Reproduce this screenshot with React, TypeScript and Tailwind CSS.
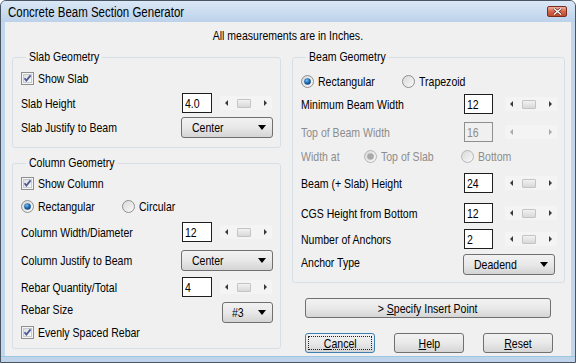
import type { ReactNode } from 'react';

const font = "font-['Liberation_Sans_Narrow','Liberation_Sans',sans-serif]";

// the dialog face is a tall, narrow sans; squeeze Liberation Sans to its width
function N({ children, c = false }: { children: ReactNode; c?: boolean }) {
  return (
    <span
      className={
        c
          ? 'inline-block origin-center scale-x-[0.81] whitespace-nowrap'
          : 'inline-block origin-left scale-x-[0.81] whitespace-nowrap'
      }
    >
      {children}
    </span>
  );
}

function Arrow({ dir, color }: { dir: 'l' | 'r'; color: string }) {
  return (
    <svg width="3" height="6" viewBox="0 0 3 6">
      <path d={dir === 'l' ? 'M3 0V6L0 3Z' : 'M0 0V6L3 3Z'} fill={color} />
    </svg>
  );
}

function Scroll({ disabled = false }: { disabled?: boolean }) {
  const c = disabled ? '#a8a8a8' : '#3a3a3a';
  return (
    <div className="flex h-[14px] w-[52px] items-center bg-[#f4f4f4]">
      <div className="flex w-[13px] justify-center">
        <Arrow dir="l" color={c} />
      </div>
      {disabled ? (
        <div className="flex-1" />
      ) : (
        <>
          <div className="ml-[4px] h-[9px] w-[14px] rounded-[1px] border border-[#c4c4c4] bg-gradient-to-b from-[#f2f2f2] to-[#d8d8d8]" />
          <div className="flex-1" />
        </>
      )}
      <div className="flex w-[13px] justify-center">
        <Arrow dir="r" color={c} />
      </div>
    </div>
  );
}

function NumBox({ value, w = 30, disabled = false }: { value: string; w?: number; disabled?: boolean }) {
  return (
    <div
      className={`flex h-[20px] items-center border pl-[2px] ${
        disabled ? 'border-[#8f8f8f] bg-[#f0f0f0] text-[#8d8d8d]' : 'border-[#1f1f1f] bg-white text-black'
      } ${w === 30 ? 'w-[30px]' : 'w-[29px]'}`}
    >
      <N>{value}</N>
    </div>
  );
}

function Check({ label }: { label: string }) {
  return (
    <div className="flex items-center">
      <svg width="13" height="13" viewBox="0 0 13 13">
        <defs>
          <linearGradient id="cb" x1="0" y1="0" x2="1" y2="1">
            <stop offset="0" stopColor="#dcdcdc" />
            <stop offset="1" stopColor="#fbfbfb" />
          </linearGradient>
        </defs>
        <rect x="0.5" y="0.5" width="12" height="12" fill="#f4f4f4" stroke="#8e8f8f" />
        <rect x="2.5" y="2.5" width="8" height="8" fill="url(#cb)" stroke="#c6cbd2" />
        <path d="M3.5 6.2L5.4 8.6L9.6 3.4" fill="none" stroke="#4a5b98" strokeWidth="1.8" />
      </svg>
      <span className="ml-[4px]">
        <N>{label}</N>
      </span>
    </div>
  );
}

function Radio({ label, checked = false, disabled = false }: { label: string; checked?: boolean; disabled?: boolean }) {
  return (
    <div className={`flex items-center ${disabled ? 'text-[#8d8d8d]' : ''}`}>
      <svg width="13" height="13" viewBox="0 0 13 13">
        <defs>
          <radialGradient id="rd" cx="0.4" cy="0.35" r="0.7">
            <stop offset="0" stopColor="#7fc3f2" />
            <stop offset="0.5" stopColor="#1f6fb8" />
            <stop offset="1" stopColor="#0c3c70" />
          </radialGradient>
          <linearGradient id="rb" x1="0" y1="0" x2="1" y2="1">
            <stop offset="0" stopColor="#d8d8d8" />
            <stop offset="1" stopColor="#fafafa" />
          </linearGradient>
        </defs>
        <circle cx="6.5" cy="6.5" r="6" fill="url(#rb)" stroke={disabled ? '#b5b5b5' : '#8e8f8f'} />
        {checked && <circle cx="6.5" cy="6.5" r="3.3" fill={disabled ? '#a9a9a9' : 'url(#rd)'} />}
      </svg>
      <span className="ml-[4px]">
        <N>{label}</N>
      </span>
    </div>
  );
}

function Combo({ value, wide = true }: { value: string; wide?: boolean }) {
  return (
    <div
      className={`flex h-[21px] items-center justify-between rounded-[3px] border border-[#707070] bg-gradient-to-b from-[#f2f2f2] via-[#e8e8e8] to-[#d4d4d4] pr-[6px] ${
        wide ? 'w-[92px] pl-[10px]' : 'w-[51px] pl-[9px]'
      }`}
    >
      <N>{value}</N>
      <svg width="8" height="5" viewBox="0 0 8 5">
        <path d="M0 0H8L4 5Z" fill="#000" />
      </svg>
    </div>
  );
}

function Btn({ children, w, focus = false }: { children: ReactNode; w: string; focus?: boolean }) {
  return (
    <div
      className={`flex h-[20px] items-center justify-center rounded-[3px] border bg-gradient-to-b from-[#f2f2f2] via-[#e9e9e9] to-[#d5d5d5] ${w} ${
        focus ? 'border-[#3c7fb1] outline outline-1 -outline-offset-4 outline-dotted outline-[#222]' : 'border-[#707070]'
      }`}
    >
      <N c>{children}</N>
    </div>
  );
}

function Group({ title, tw, children, className }: { title: string; tw: string; children: ReactNode; className: string }) {
  return (
    <fieldset className={`rounded-[3px] border border-[#d5dfe5] ${className}`}>
      <legend className="ml-[5px] px-[3px] leading-[14px]">
        <span className={`block ${tw}`}>
          <N>{title}</N>
        </span>
      </legend>
      {children}
    </fieldset>
  );
}

function Row({ label, children, cls, lw, dim = false }: { label: string; children: ReactNode; cls: string; lw: string; dim?: boolean }) {
  return (
    <div className={`flex items-center ${cls}`}>
      <div className={`${lw} ${dim ? 'text-[#8d8d8d]' : ''}`}>
        <N>{label}</N>
      </div>
      {children}
    </div>
  );
}

function Stepper({ value, gap, w, disabled = false }: { value: string; gap: string; w?: number; disabled?: boolean }) {
  return (
    <>
      <NumBox value={value} w={w} disabled={disabled} />
      <div className={gap}>
        <Scroll disabled={disabled} />
      </div>
    </>
  );
}

export default function App() {
  return (
    <div
      className={`flex h-[363px] w-[576px] flex-col overflow-hidden rounded-t-[6px] border border-[#4a5563] bg-[#c2d6ec] text-[13px] leading-none text-black ${font}`}
    >
      <div className="flex h-[21px] shrink-0 items-center justify-between bg-gradient-to-b from-[#dae8f6] to-[#bcd2ea] pl-[7px] pr-[8px]">
        <span className="inline-block origin-left scale-x-[0.82] whitespace-nowrap text-[14px]">
          Concrete Beam Section Generator
        </span>
        <div className="flex h-[11px] w-[20px] items-center justify-center rounded-[2px] border border-[#7b2e20] bg-gradient-to-b from-[#eeb0a0] via-[#d46548] to-[#c04a2e]">
          <svg width="9" height="7" viewBox="0 0 9 7">
            <path d="M1 0.5L8 6.5M8 0.5L1 6.5" stroke="#5a2114" strokeWidth="2.6" />
            <path d="M1 0.5L8 6.5M8 0.5L1 6.5" stroke="#fff" strokeWidth="1.4" />
          </svg>
        </div>
      </div>

      <div className="flex min-h-0 flex-1 px-[4px]">
        <div className="flex-1 bg-[#f0f0f0]">
          <div className="mt-[6px] flex h-[14px] items-center justify-center">
            <N c>All measurements are in Inches.</N>
          </div>

          <div className="mt-[8px] flex items-start">
            {/* left column */}
            <div className="ml-[7px] w-[269px]">
              <Group title="Slab Geometry" tw="w-[70px]" className="pb-[9px] pl-[8px]">
                <div className="mt-[4px] flex h-[20px] items-center">
                  <Check label="Show Slab" />
                </div>
                <Row label="Slab Height" cls="mt-[5px] h-[20px]" lw="w-[161px]">
                  <Stepper value="4.0" gap="ml-[8px]" />
                </Row>
                <Row label="Slab Justify to Beam" cls="mt-[4px] h-[21px]" lw="w-[160px]">
                  <Combo value="Center" />
                </Row>
              </Group>

              <Group title="Column Geometry" tw="w-[85px]" className="mt-[8px] pb-[7px] pl-[8px]">
                <div className="mt-[3px] flex h-[20px] items-center">
                  <Check label="Show Column" />
                </div>
                <div className="mt-[3px] flex h-[20px] items-center">
                  <div className="w-[101px]">
                    <Radio label="Rectangular" checked />
                  </div>
                  <Radio label="Circular" />
                </div>
                <Row label="Column Width/Diameter" cls="mt-[6px] h-[20px]" lw="w-[161px]">
                  <Stepper value="12" gap="ml-[8px]" />
                </Row>
                <Row label="Column Justify to Beam" cls="mt-[8px] h-[21px]" lw="w-[160px]">
                  <Combo value="Center" />
                </Row>
                <Row label="Rebar Quantity/Total" cls="mt-[6px] h-[20px]" lw="w-[161px]">
                  <Stepper value="4" gap="ml-[8px]" />
                </Row>
                <div className="mt-[5px] flex h-[20px] items-start">
                  <div className="w-[201px] pt-[1px]">
                    <N>Rebar Size</N>
                  </div>
                  <Combo value="#3" wide={false} />
                </div>
                <div className="mt-[1px] flex h-[18px] items-center">
                  <Check label="Evenly Spaced Rebar" />
                </div>
              </Group>
            </div>

            {/* right column */}
            <div className="ml-[11px] w-[273px]">
              <Group title="Beam Geometry" tw="w-[77px]" className="pb-[7px] pl-[8px]">
                <div className="mt-[7px] flex h-[20px] items-center">
                  <div className="w-[101px]">
                    <Radio label="Rectangular" checked />
                  </div>
                  <Radio label="Trapezoid" />
                </div>
                <Row label="Minimum Beam Width" cls="mt-[3px] h-[20px]" lw="w-[163px]">
                  <Stepper value="12" w={29} gap="ml-[12px]" />
                </Row>
                <Row label="Top of Beam Width" dim cls="mt-[8px] h-[20px]" lw="w-[163px]">
                  <Stepper value="16" w={29} gap="ml-[12px]" disabled />
                </Row>
                <div className="mt-[5px] flex h-[18px] items-center">
                  <div className="w-[63px] text-[#8d8d8d]">
                    <N>Width at</N>
                  </div>
                  <div className="w-[97px]">
                    <Radio label="Top of Slab" checked disabled />
                  </div>
                  <Radio label="Bottom" disabled />
                </div>
                <Row label="Beam (+ Slab) Height" cls="mt-[8px] h-[20px]" lw="w-[163px]">
                  <Stepper value="24" w={29} gap="ml-[12px]" />
                </Row>
                <Row label="CGS Height from Bottom" cls="mt-[10px] h-[20px]" lw="w-[163px]">
                  <Stepper value="12" w={29} gap="ml-[12px]" />
                </Row>
                <Row label="Number of Anchors" cls="mt-[6px] h-[20px]" lw="w-[163px]">
                  <Stepper value="2" w={29} gap="ml-[12px]" />
                </Row>
                <div className="mt-[5px] flex h-[21px] items-start">
                  <div className="w-[162px] pt-[2px]">
                    <N>Anchor Type</N>
                  </div>
                  <Combo value="Deadend" />
                </div>
              </Group>

              <div className="ml-[13px] mt-[15px]">
                <Btn w="w-[246px]">
                  &gt; <span className="underline">S</span>pecify Insert Point
                </Btn>
                <div className="mt-[15px] flex gap-[19px]">
                  <Btn w="w-[70px]" focus>
                    <span className="underline">C</span>ancel
                  </Btn>
                  <Btn w="w-[70px]">
                    <span className="underline">H</span>elp
                  </Btn>
                  <Btn w="w-[70px]">
                    <span className="underline">R</span>eset
                  </Btn>
                </div>
              </div>
            </div>
          </div>
        </div>
      </div>

      <div className="h-[6px] shrink-0 border-t border-[#9cc7e3] bg-[#bfd4eb]" />
    </div>
  );
}
